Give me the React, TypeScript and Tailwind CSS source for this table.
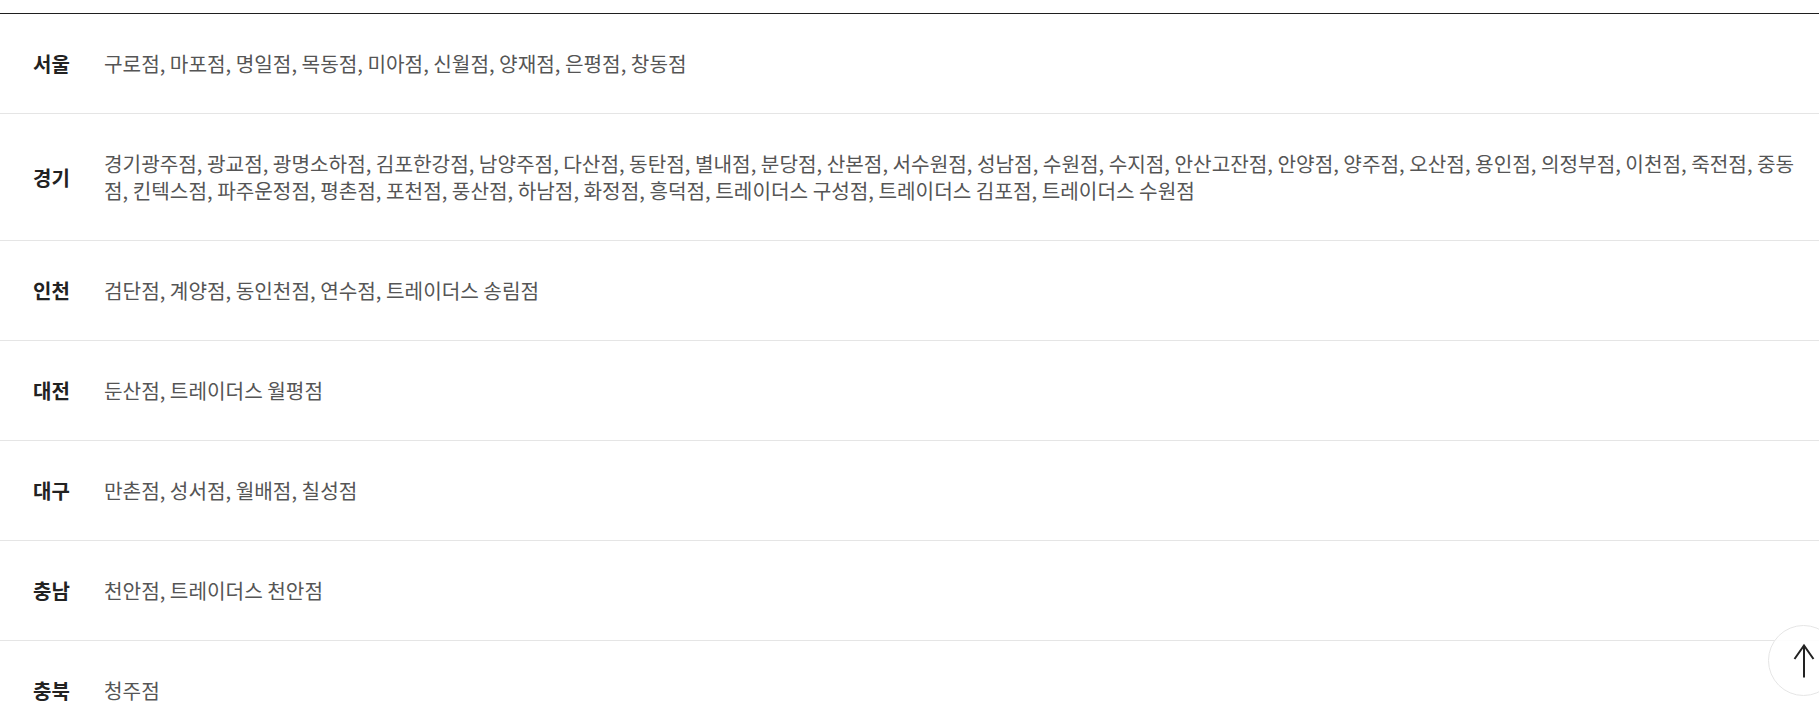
type Region = {
  name: string;
  stores: string[];
};

const regions: Region[] = [
  {
    name: "서울",
    stores: ["구로점", "마포점", "명일점", "목동점", "미아점", "신월점", "양재점", "은평점", "창동점"],
  },
  {
    name: "경기",
    stores: [
      "경기광주점", "광교점", "광명소하점", "김포한강점", "남양주점", "다산점", "동탄점", "별내점",
      "분당점", "산본점", "서수원점", "성남점", "수원점", "수지점", "안산고잔점", "안양점", "양주점",
      "오산점", "용인점", "의정부점", "이천점", "죽전점", "중동점", "킨텍스점", "파주운정점", "평촌점",
      "포천점", "풍산점", "하남점", "화정점", "흥덕점", "트레이더스 구성점", "트레이더스 김포점",
      "트레이더스 수원점",
    ],
  },
  { name: "인천", stores: ["검단점", "계양점", "동인천점", "연수점", "트레이더스 송림점"] },
  { name: "대전", stores: ["둔산점", "트레이더스 월평점"] },
  { name: "대구", stores: ["만촌점", "성서점", "월배점", "칠성점"] },
  { name: "충남", stores: ["천안점", "트레이더스 천안점"] },
  { name: "충북", stores: ["청주점"] },
];

function RegionRow({ region }: { region: Region }) {
  return (
    <li className="flex items-center border-b border-[#e5e5e5] py-9 pl-[33px] pr-4">
      <strong className="w-[71px] shrink-0 text-[20px] font-bold leading-[27px] text-[#222]">
        {region.name}
      </strong>
      <p className="text-[20.2px] leading-[27px] text-[#555]">{region.stores.join(", ")}</p>
    </li>
  );
}

export default function App() {
  return (
    <div
      className="min-h-screen bg-white pt-[13px]"
      style={{ fontFamily: '"Noto Sans CJK KR", "Noto Sans", sans-serif' }}
    >
      <ul className="border-t border-[#1f1f1f]">
        {regions.map((region) => (
          <RegionRow key={region.name} region={region} />
        ))}
      </ul>

      {/* top button hangs partly off the right edge, like the original */}
      <button
        type="button"
        aria-label="맨 위로"
        className="fixed top-[625px] left-[1768px] flex h-[71px] w-[71px] items-center justify-center rounded-full border border-[#e5e5e5] bg-white/90 text-[#222]"
      >
        <svg width="40" height="40" viewBox="0 0 40 40" fill="none" stroke="currentColor" strokeWidth="2">
          <path d="M20 4.5v32" />
          <path d="M10.5 18 20 4.5 29.5 18" />
        </svg>
      </button>
    </div>
  );
}
